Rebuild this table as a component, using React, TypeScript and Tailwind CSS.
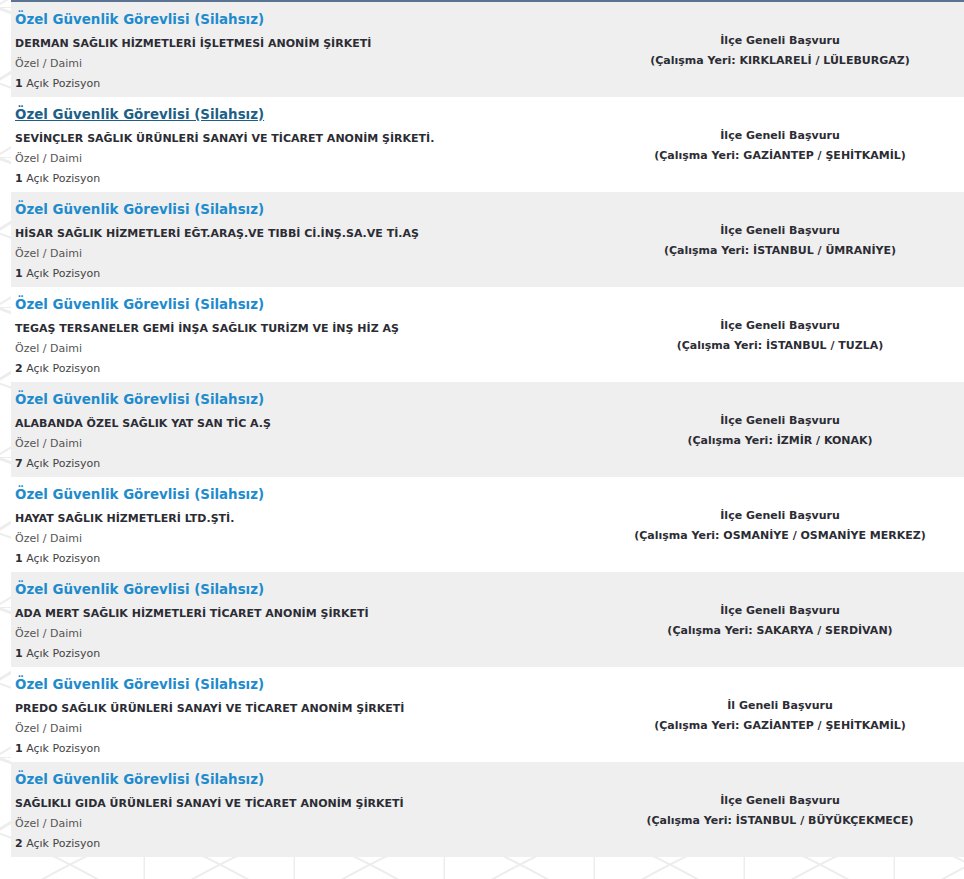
const jobs = [
  { company: "DERMAN SAĞLIK HİZMETLERİ İŞLETMESİ ANONİM ŞİRKETİ", count: 1, scope: "İlçe Geneli Başvuru", place: "KIRKLARELİ / LÜLEBURGAZ" },
  { company: "SEVİNÇLER SAĞLIK ÜRÜNLERİ SANAYİ VE TİCARET ANONİM ŞİRKETİ.", count: 1, scope: "İlçe Geneli Başvuru", place: "GAZİANTEP / ŞEHİTKAMİL", hover: true },
  { company: "HİSAR SAĞLIK HİZMETLERİ EĞT.ARAŞ.VE TIBBİ Cİ.İNŞ.SA.VE Tİ.AŞ", count: 1, scope: "İlçe Geneli Başvuru", place: "İSTANBUL / ÜMRANİYE" },
  { company: "TEGAŞ TERSANELER GEMİ İNŞA SAĞLIK TURİZM VE İNŞ HİZ AŞ", count: 2, scope: "İlçe Geneli Başvuru", place: "İSTANBUL / TUZLA" },
  { company: "ALABANDA ÖZEL SAĞLIK YAT SAN TİC A.Ş", count: 7, scope: "İlçe Geneli Başvuru", place: "İZMİR / KONAK" },
  { company: "HAYAT SAĞLIK HİZMETLERİ LTD.ŞTİ.", count: 1, scope: "İlçe Geneli Başvuru", place: "OSMANİYE / OSMANİYE MERKEZ" },
  { company: "ADA MERT SAĞLIK HİZMETLERİ TİCARET ANONİM ŞİRKETİ", count: 1, scope: "İlçe Geneli Başvuru", place: "SAKARYA / SERDİVAN" },
  { company: "PREDO SAĞLIK ÜRÜNLERİ SANAYİ VE TİCARET ANONİM ŞİRKETİ", count: 1, scope: "İl Geneli Başvuru", place: "GAZİANTEP / ŞEHİTKAMİL" },
  { company: "SAĞLIKLI GIDA ÜRÜNLERİ SANAYİ VE TİCARET ANONİM ŞİRKETİ", count: 2, scope: "İlçe Geneli Başvuru", place: "İSTANBUL / BÜYÜKÇEKMECE" },
];

// faint arcs-and-lines motif behind the list
const BgPattern = () => (
  <svg className="absolute inset-0 w-full h-full" aria-hidden="true">
    <defs>
      <pattern id="bgp" width="150" height="150" patternUnits="userSpaceOnUse" x="-5" y="7">
        <g stroke="#ededed" strokeWidth="3" fill="none">
          <path d="M150 0 V150" />
          <path d="M0 0 Q60 20 150 75 M150 0 Q90 20 0 75" />
          <path d="M0 75 Q60 95 150 150 M150 75 Q90 95 0 150" strokeWidth="2" />
          <path d="M0 0 H150" strokeWidth="2" />
        </g>
      </pattern>
    </defs>
    <rect width="100%" height="100%" fill="url(#bgp)" />
  </svg>
);

const App = () => {
  return (
    <div className="relative min-h-[879px] bg-white font-['DejaVu_Sans',sans-serif] overflow-hidden">
      <BgPattern />
      <div className="relative pl-[11px]">
        <div className="h-[2px] bg-[#5a7391]" />
        {jobs.map((job, i) => (
          <div
            key={i}
            className={`grid grid-cols-[585px_1fr] h-[95px] ${i % 2 === 0 ? "bg-[#efefef]" : "bg-white"}`}
          >
            <div className="pl-[4px] pt-[7px]">
              <a
                href="#"
                className={`block h-[22px] leading-[22px] text-[13.4px] font-bold ${
                  job.hover ? "text-[#1d5f86] underline" : "text-[#1e8bcd]"
                }`}
              >
                Özel Güvenlik Görevlisi (Silahsız)
              </a>
              <div className="h-[3px]" />
              <div className="h-[20px] leading-[20px] text-[11px] font-bold text-[#2c2c34]">{job.company}</div>
              <div className="h-[20px] leading-[20px] text-[11px] text-[#555]">Özel / Daimi</div>
              <div className="h-[20px] leading-[20px] text-[11px] text-[#444]">
                <span className="font-bold text-[#2c2c34]">{job.count}</span> Açık Pozisyon
              </div>
            </div>
            <div className="flex flex-col items-center justify-center text-[11px] font-bold text-[#2c2c34] leading-[20px] pt-[2px]">
              <div>{job.scope}</div>
              <div>(Çalışma Yeri: {job.place})</div>
            </div>
          </div>
        ))}
      </div>
    </div>
  );
};

export default App;
